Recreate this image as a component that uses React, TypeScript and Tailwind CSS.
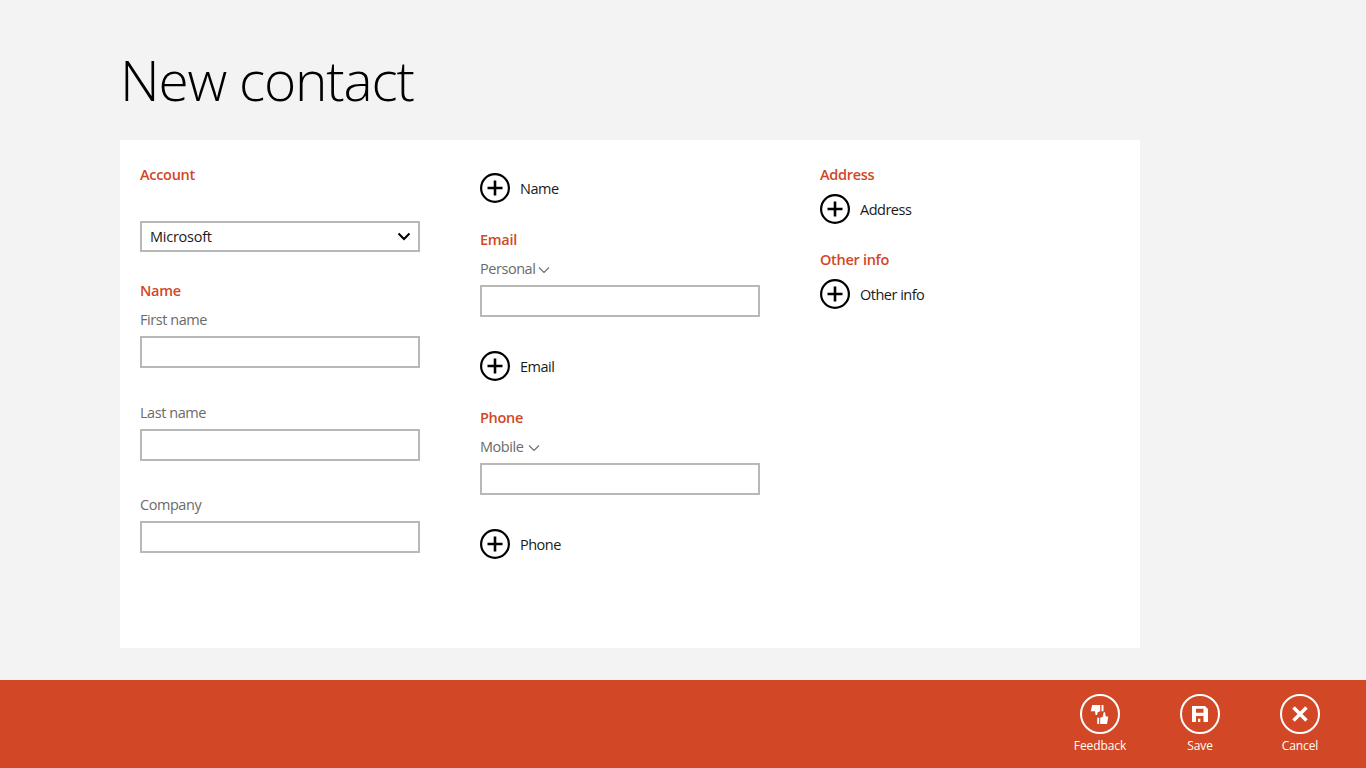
const FONT = { fontFamily: '"Open Sans", "Noto Sans", sans-serif' };

function SectionLabel({ children, className = "" }: { children: string; className?: string }) {
  return <div className={`h-5 pt-px text-[14.5px] leading-5 font-semibold tracking-[-0.3px] text-[#d24726] ${className}`}>{children}</div>;
}

function FieldLabel({ children, className = "" }: { children: string; className?: string }) {
  return <div className={`h-5 pt-px text-[14.5px] leading-5 tracking-[-0.45px] text-[#6b6b6b] ${className}`}>{children}</div>;
}

function TextBox({ className = "" }: { className?: string }) {
  return <div className={`h-8 w-[280px] border-2 border-[#b8b8b8] bg-white ${className}`} />;
}

function AddRow({ label, className = "" }: { label: string; className?: string }) {
  return (
    <div className={`flex h-[30px] items-center gap-[10px] ${className}`}>
      <svg width="30" height="30" viewBox="0 0 30 30" fill="none" stroke="#000">
        <circle cx="15" cy="15" r="13.900" strokeWidth="2.200" />
        <path d="M15 7.500v15M7.500 15h15" strokeWidth="2.600" />
      </svg>
      <span className="pt-[2px] text-[14.5px] leading-5 tracking-[-0.5px] text-[#1a1a1a]">{label}</span>
    </div>
  );
}

function TinyChevron({ className = "" }: { className?: string }) {
  return (
    <svg className={className} width="12" height="8" viewBox="0 0 12 8" fill="none" stroke="#6b6b6b" strokeWidth="1.1">
      <path d="M1 1.500l5 5 5-5" />
    </svg>
  );
}

function FeedbackIcon() {
  return (
    <svg width="24" height="24" viewBox="0 0 24 24" fill="#fff" className="shrink-0">
      <path d="M4.200 3h8v6.300l-2.500 1L9 13H7.600L7 9.300H2.700z" />
      <rect x="13.500" y="3" width="2" height="6.300" />
      <path d="M12.200 22v-6.300l2.500-1 1-4.400h1.400l.6 4.200h2.600L19 22z" />
      <rect x="9.200" y="15.700" width="2" height="6.300" />
    </svg>
  );
}

function SaveIcon() {
  return (
    <svg width="16" height="16" viewBox="0 0 16 16" className="shrink-0">
      <path
        fill="#fff"
        fillRule="evenodd"
        d="M0 0h13l3 3v13H0zM4 2.700v4h7.500v-4zM4 10v6h7.500v-6zM6 12.700h2.300V16H6z"
      />
    </svg>
  );
}

function CloseIcon() {
  return (
    <svg width="20" height="20" viewBox="0 0 20 20" fill="none" stroke="#fff" strokeWidth="3.400" className="shrink-0">
      <path d="M3.500 3.500l13 13M16.500 3.500l-13 13" />
    </svg>
  );
}

function BarButton({ label, children }: { label: string; children: React.ReactNode }) {
  return (
    <div className="flex w-[100px] flex-col items-center">
      <div className="flex h-10 w-10 items-center justify-center rounded-full border-2 border-white">{children}</div>
      <div className="mt-[2px] text-[12px] leading-[20px] tracking-[-0.1px] text-white">{label}</div>
    </div>
  );
}

export default function App() {
  return (
    <div className="flex h-[768px] w-[1366px] flex-col overflow-hidden bg-[#f3f3f3]" style={FONT}>
      <div className="flex-1 pl-[120px]">
        <h1 className="h-[140px] pt-[40px] text-[55px] leading-[80px] font-light tracking-[-1.2px] text-black">New contact</h1>
        <div className="flex h-[508px] w-[1020px] bg-white pl-5">
          <div className="w-[340px] pt-6">
            <SectionLabel>Account</SectionLabel>
            <div className="mt-[37px] flex h-[31px] w-[280px] items-center justify-between border-2 border-[#b8b8b8] pr-[7px] pl-2">
              <span className="text-[14.5px] tracking-[-0.25px] text-[#1a1a1a]">Microsoft</span>
              <svg width="14" height="9" viewBox="0 0 14 9" fill="none" stroke="#000" strokeWidth="2">
                <path d="M1.500 1.500L7 7l5.500-5.500" />
              </svg>
            </div>
            <SectionLabel className="mt-7">Name</SectionLabel>
            <FieldLabel className="mt-[9px]">First name</FieldLabel>
            <TextBox className="mt-[7px]" />
            <FieldLabel className="mt-[34px]">Last name</FieldLabel>
            <TextBox className="mt-[7px]" />
            <FieldLabel className="mt-[33px]">Company</FieldLabel>
            <TextBox className="mt-[7px]" />
          </div>
          <div className="w-[340px] pt-[33px]">
            <AddRow label="Name" />
            <SectionLabel className="mt-[26px]">Email</SectionLabel>
            <div className="mt-[9px] flex h-5 items-center gap-[3px]">
              <FieldLabel>Personal</FieldLabel>
              <TinyChevron className="mt-[3px]" />
            </div>
            <TextBox className="mt-[7px]" />
            <AddRow label="Email" className="mt-[34px]" />
            <SectionLabel className="mt-[26px]">Phone</SectionLabel>
            <div className="mt-[9px] flex h-5 items-center gap-[5px]">
              <FieldLabel>Mobile</FieldLabel>
              <TinyChevron className="mt-[3px]" />
            </div>
            <TextBox className="mt-[7px]" />
            <AddRow label="Phone" className="mt-[34px]" />
          </div>
          <div className="pt-6">
            <SectionLabel>Address</SectionLabel>
            <AddRow label="Address" className="mt-[10px]" />
            <SectionLabel className="mt-[25px]">Other info</SectionLabel>
            <AddRow label="Other info" className="mt-[10px]" />
          </div>
        </div>
      </div>
      <div className="flex h-[88px] items-start justify-end bg-[#d24726] pt-[14px] pr-4">
        <BarButton label="Feedback"><FeedbackIcon /></BarButton>
        <BarButton label="Save"><SaveIcon /></BarButton>
        <BarButton label="Cancel"><CloseIcon /></BarButton>
      </div>
    </div>
  );
}
